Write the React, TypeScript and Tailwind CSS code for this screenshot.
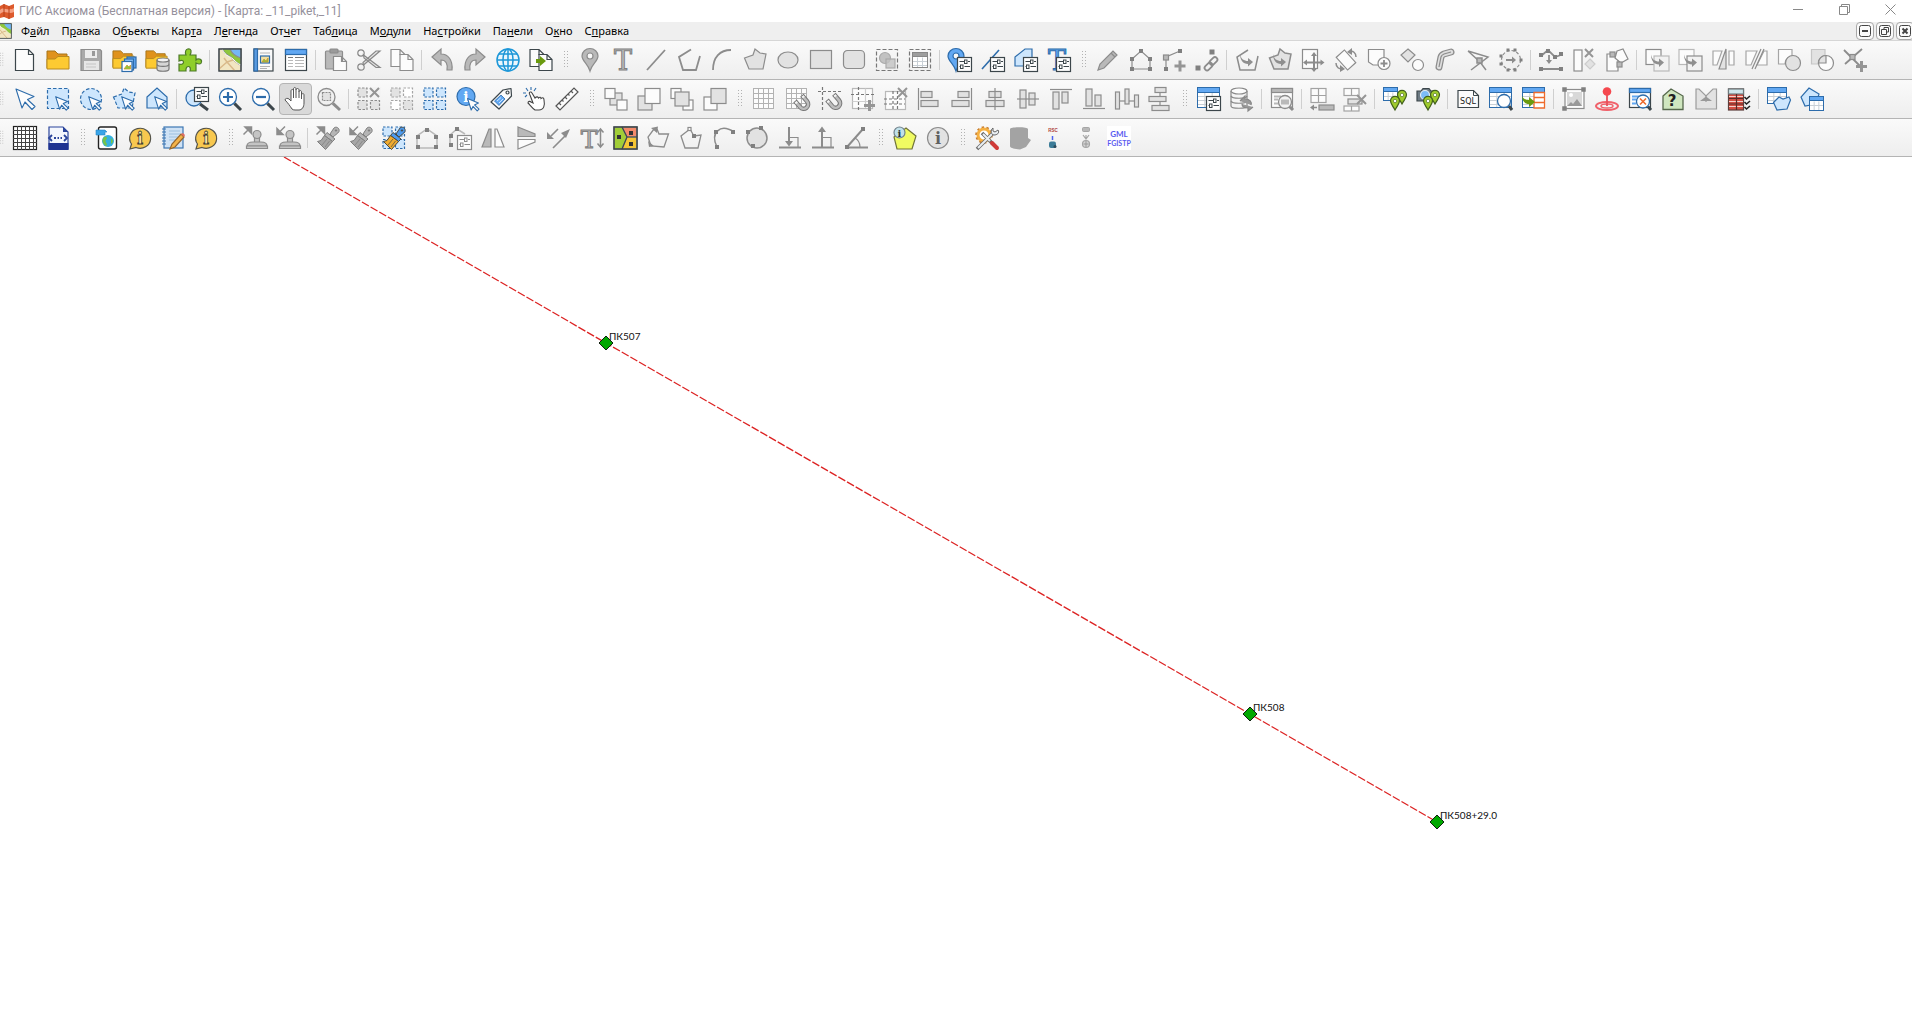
import React from "react";

const G = "#8c8c8c";
const M = "#b9b9b9";
const L = "#e2e2e2";
const D = "#3c464b";
const B = "#2d6cab";
const LB = "#cde6fd";
const AB = "#62a8f2";

type Item = [string, React.ReactNode] | "sep" | "grip";

/* ---------- shared icon parts ---------- */

const Sliders = ({ c = D }: { c?: string }) => (
  <g stroke={c} strokeWidth="1">
    <rect x="9.5" y="9.5" width="14" height="14" fill="#fdfdfd" strokeWidth="1.2" />
    <path d="M11.500 13.500H16M20 13.500H22M11.500 18.500H12.500M16.500 18.500H22" />
    <rect x="16.500" y="12" width="2.500" height="3.500" />
    <rect x="12.500" y="17" width="2.500" height="3.500" />
  </g>
);

const Cursor = ({ x = 9, y = 9, s = 0.66 }: { x?: number; y?: number; s?: number }) => (
  <path
    transform={`translate(${x} ${y}) scale(${s})`}
    d="M1 1L19 8.500L12.500 11.500L20 18.500L17 21.500L10 14L7 20Z"
    fill="#fdfdfd"
    stroke={B}
    strokeWidth={1.1 / s}
    strokeLinejoin="round"
  />
);

const Nodes = ({ p, s = 4, c = "#808080" }: { p: [number, number][]; s?: number; c?: string }) => (
  <g fill={c} stroke="none">
    {p.map(([x, y], i) => (
      <rect key={i} x={x - s / 2} y={y - s / 2} width={s} height={s} />
    ))}
  </g>
);

const Cross = ({ x, y, s = 8 }: { x: number; y: number; s?: number }) => (
  <path d={`M${x} ${y}l${s} ${s}M${x + s} ${y}l${-s} ${s}`} strokeWidth="2" stroke="#959595" />
);

const Plus = ({ x, y }: { x: number; y: number }) => (
  <path d={`M${x} ${y - 5.500}v11M${x - 5.500} ${y}h11`} stroke="#959595" strokeWidth="3" />
);

const Turn = ({ x = 0, y = 0 }: { x?: number; y?: number }) => (
  <path
    transform={`translate(${x} ${y})`}
    d="M6 7C7 12 10 14 14 14V11L19 15L14 19.500V17C9 17 6 13 6 7Z"
    fill="#8f8f8f"
    stroke="none"
  />
);

const GreenPin = ({ x, y }: { x: number; y: number }) => (
  <g transform={`translate(${x} ${y})`}>
    <path d="M5 14C3 10 0.500 8 0.500 4.800A4.500 4.500 0 0 1 9.500 4.800C9.500 8 7 10 5 14Z" fill="#9fcb2c" stroke="#42611b" strokeWidth="1.2" />
    <circle cx="5" cy="5" r="1.700" fill="#fff" stroke="#42611b" strokeWidth="0.600" />
  </g>
);

const Lens = ({ fill = "#fff", c = B, x = 14, y = 14, r = 6 }: { fill?: string; c?: string; x?: number; y?: number; r?: number }) => (
  <g>
    <path d={`M${x + r * 0.75} ${y + r * 0.75}L23 23`} stroke={c === G ? G : D} strokeWidth="3" />
    <circle cx={x} cy={y} r={r} fill={fill} stroke={c} strokeWidth="1.3" />
  </g>
);

const Table = ({ x = 0.5, y = 0.5, w = 22, h = 20, head = AB, c = B, line = "#c9d0d6" }) => (
  <g strokeWidth="1">
    <rect x={x} y={y} width={w} height={h} fill="#fff" stroke={c} />
    <path d={`M${x + w / 3} ${y + 5}v${h - 5}M${x + (2 * w) / 3} ${y + 5}v${h - 5}`} stroke={line} />
    {[9, 13, 17]
      .filter((r) => r < h - 1)
      .map((r) => (
        <path key={r} d={`M${x} ${y + r}h${w}`} stroke={line} />
      ))}
    <rect x={x} y={y} width={w} height={h} stroke={c} />
    <rect x={x} y={y} width={w} height={h > 15 ? 5 : 4} fill={head} stroke={c} />
  </g>
);

const Folder = ({ s = 1 }: { s?: number }) => (
  <g transform={`scale(${s})`} strokeWidth="1">
    <path d="M1 20V3H9L12 6H21V9" fill="#e0921c" stroke="#a6741a" />
    <path d="M1 21V11H9L12 8.500H23V21Z" fill="#fdca32" stroke="#b98a1e" />
  </g>
);

const Page = ({ x, y, w, h, c = G }: { x: number; y: number; w: number; h: number; c?: string }) => (
  <path d={`M${x} ${y}h${w - 5}l5 5v${h - 5}h${-w}zM${x + w - 5} ${y}v5h5`} fill="#fcfcfc" stroke={c} strokeWidth="1.2" />
);

const Four = ({ c, a, b, d, e }: { c: string; a: string; b: string; d: string; e: string }) => (
  <g stroke={c} strokeDasharray="2.500 1.500" strokeWidth="1.200">
    <rect x="1" y="1" width="9" height="9" fill={a} />
    <rect x="13.500" y="1" width="9" height="9" fill={b} />
    <rect x="1" y="13.500" width="9" height="9" fill={d} />
    <rect x="13.500" y="13.500" width="9" height="9" fill={e} />
  </g>
);

const Grid = () => (
  <g stroke="#b2b2b2" strokeWidth="1">
    <rect x="1.500" y="1.500" width="20" height="20" fill="#fcfcfc" />
    <path d="M6.500 1.500v20M11.500 1.500v20M16.500 1.500v20M1.500 6.500h20M1.500 11.500h20M1.500 16.500h20" />
  </g>
);

const Magnet = ({ x = 0, y = 0 }: { x?: number; y?: number }) => (
  <g transform={`translate(${x} ${y}) rotate(-40)`}>
    <path d="M0 0V8A4.500 4.500 0 0 0 9 8V0" stroke="#777" strokeWidth="4.600" />
    <path d="M0 1V8A4.500 4.500 0 0 0 9 8V1" stroke="#bdbdbd" strokeWidth="2.600" />
    <path d="M0 1V3M9 1V3" stroke="#f4f4f4" strokeWidth="2.600" />
  </g>
);

const TLetter = ({ c = "#7f7f7f", f = "#bcbcbc", x = 12, size = 27 }: { c?: string; f?: string; x?: number; size?: number }) => (
  <text x={x} y="21.500" textAnchor="middle" fontFamily="DejaVu Serif, serif" fontSize={size} fill={f} stroke={c} strokeWidth="1">
    T
  </text>
);

const InfoBubble = () => (
  <g>
    <path d="M2 23L3.500 18A10.500 10 0 1 1 8 21.500Z" fill="#f8c84f" stroke="#55544a" strokeWidth="1.200" />
    <text x="12" y="17.500" textAnchor="middle" fontFamily="DejaVu Serif, serif" fontWeight="700" fontSize="16" fill="#ffeeb0" stroke="#3d3d33" strokeWidth="0.800">
      i
    </text>
  </g>
);

const Brush = ({ c = "#7d7d7d", h = "#b5b5b5", b = "#a6a6a6" }: { c?: string; h?: string; b?: string }) => (
  <g stroke={c} strokeWidth="1">
    <path d="M14 8L18 2C20 0 24 2 23 5.500C21.500 8 19 9 17 11Z" fill={h} />
    <path d="M11 6.500L19 13L16.500 15.500L8.500 9.500Z" fill={h} />
    <path d="M8.500 9.500L16.500 15.500L9.500 23.500L1.500 15.500L5 14.500Z" fill={b} />
    <path d="M11 13L6 19M13.500 15L9 21" strokeWidth="0.700" />
    <circle cx="20" cy="4.500" r="0.700" fill={c} />
  </g>
);

const ArrowUR = ({ x = 0, y = 0 }: { x?: number; y?: number }) => (
  <path transform={`translate(${x} ${y})`} d="M0 8L5 3M1.500 0.500H8V7Z" fill="#8c8c8c" stroke="#8c8c8c" strokeWidth="1.500" />
);
const ArrowDL = ({ x = 0, y = 0 }: { x?: number; y?: number }) => (
  <path transform={`translate(${x} ${y})`} d="M9 0L4 5M1 2V8H7Z" fill="#8c8c8c" stroke="#8c8c8c" strokeWidth="1.500" />
);

const Stamp = () => (
  <g fill="#c4c4c4" stroke={G} strokeWidth="1.200">
    <path d="M11.500 17V11H16.500V17Z" />
    <circle cx="14" cy="8.500" r="4" />
    <path d="M4 20C4 17 7 16 10 16H18C21 16 24 17 24 20Z" />
    <path d="M3.500 20H24.500V22.500H3.500Z" />
  </g>
);

const MapPic = () => (
  <g>
    <rect x="1" y="1" width="22" height="22" fill="#f2e6c2" />
    <path d="M4 1H23V17C19 16 17 13 14 10S8 8 4 1Z" fill="#8fc63d" />
    <path d="M12 1H23V10C19 9 14 6 12 1Z" fill="#74b7f5" />
    <path d="M1 21L9 14M9 14L17 23M9 14L6 10M9 14L15 12" stroke="#d9b98a" strokeWidth="1.500" />
    <path d="M4 1C8 9 12 8 15 11S20 16 23 17" stroke="#fdfdfd" strokeWidth="1" />
    <rect x="1" y="1" width="22" height="22" stroke={D} strokeWidth="1.300" />
  </g>
);

const Pin = ({ c, f, x = 12 }: { c: string; f: string; x?: number }) => (
  <g stroke={c} strokeWidth="1.200">
    <path d={`M${x} 23C${x - 2} 16 ${x - 8} 13 ${x - 8} 8A8 7.500 0 0 1 ${x + 8} 8C${x + 8} 13 ${x + 2} 16 ${x} 23Z`} fill={f} />
    <circle cx={x} cy="8" r="3" fill="#f8f8f8" />
  </g>
);

const POLY = "M1.500 10L10 7L12 1L17 5L23 6L20 21H6Z";

/* ---------- toolbars ---------- */

const row1: Item[] = [
  ["Новый", <Page x={2.5} y={1.5} w={18} h={21} c={D} />],
  ["Открыть", <Folder />],
  ["Сохранить", <g><path d="M2 1.500H21L22.500 3V22.500H2Z" fill="#a9a9a9" stroke={G} /><rect x="6" y="2" width="12" height="8" fill="#ececec" stroke="none" /><rect x="13" y="3" width="3" height="5" fill="#999" stroke="none" /><rect x="5" y="13" width="15" height="9" fill="#e6e6e6" stroke="none" /><path d="M7 16H17M7 19H17" stroke="#c4c4c4" /></g>],
  ["Открыть рабочий набор", <g><Folder s={0.96} /><g stroke={B} fill="#fff"><rect x="15" y="9" width="9" height="11" fill="#62a8f2" /><rect x="12.500" y="11" width="9" height="11" fill="#8cc3fa" /><rect x="10" y="13.500" width="10" height="10" /></g><path d="M12 21L15 17L17 19L18.500 17V21Z" fill="#8fc63d" stroke="#d19c2b" strokeWidth="0.800" /></g>],
  ["Открыть базу данных", <g><Folder s={0.96} /><path d="M12 12V21C12 24 24 24 24 21V12" fill="#d6d6d6" stroke="#777" /><ellipse cx="18" cy="12" rx="6" ry="2" fill="#f4f4f4" stroke="#777" /><path d="M12 16.500C13 19 23 19 24 16.500" stroke="#777" /></g>],
  ["Модуль", <path d="M1 7H8C5 0 14 -1 13 4C13 6 12 6 12 7H18V12C20 10 24 11 23.500 14C23 17 20 16 18 15V23H12C14 17 7 17 8 23H1V16C7 18 7 10 1 13Z" fill="#8fce2b" stroke="#4d7a28" strokeWidth="1.200" />],
  "sep",
  ["Карта", <MapPic />],
  ["Отчет", <g><rect x="3" y="1" width="19" height="22" fill="#fafafa" stroke={D} /><rect x="3" y="1" width="3.500" height="22" fill="#5a9be0" stroke={B} /><path d="M9 5H19M9 18.500H19M9 20.500H16" stroke="#b4b4b4" /><rect x="9.500" y="8" width="9" height="7" fill="#f2dfa0" stroke={B} /><path d="M11 14L13 11L15 13L17 10V14Z" fill="#8fc63d" stroke="#c79b31" strokeWidth="0.800" /></g>],
  ["Таблица", <g><rect x="1.500" y="1.500" width="21" height="21" fill="#fff" stroke={D} /><rect x="1.500" y="1.500" width="21" height="5" fill={AB} stroke={B} /><path d="M4 9.500H9M11 9.500H20" stroke="#777" /><path d="M4 12.500H9M11 12.500H20M4 15.500H9M11 15.500H20M4 18.500H9M11 18.500H20" stroke="#b9b9b9" /></g>],
  "sep",
  ["Вставить", <g><rect x="1.500" y="3" width="17" height="18" rx="1" fill={M} stroke={G} /><rect x="6" y="1" width="8" height="4" rx="1" fill="#9b9b9b" /><Page x={9.5} y={8.5} w={13} h={14} /></g>],
  ["Вырезать", <g stroke="#888" strokeWidth="1.200"><circle cx="4" cy="5" r="3.200" /><circle cx="4" cy="19" r="3.200" /><path d="M6.500 7L23 19.500L19 19.500L7 10ZM6.500 17L23 3L19 3L6 14.500Z" fill="#e6e6e6" /></g>],
  ["Копировать", <g><Page x={1} y={1.5} w={14} h={17} /><Page x={10} y={6.5} w={13} h={16} /></g>],
  "sep",
  ["Отменить", <path d="M2 9L11 1V6C18 6 23 12 22 22H17C18 16 16 12 11 12V17Z" fill={M} stroke={G} />],
  ["Повторить", <path d="M22 9L13 1V6C6 6 1 12 2 22H7C6 16 8 12 13 12V17Z" fill={M} stroke={G} />],
  ["Веб-карта", <g stroke="#1d97d8" strokeWidth="1.500"><circle cx="12" cy="12" r="11" fill="#eaf6fd" /><ellipse cx="12" cy="12" rx="5" ry="11" /><path d="M12 1V23M1 12H23M3 6H21M3 18H21" /></g>],
  ["Экспорт", <g><Page x={1} y={1.5} w={14} h={17} c={D} /><Page x={10} y={6.5} w={13} h={16} c={D} /><path d="M7 11H11V8L17 13L11 18V15H7Z" fill="#6a9a0e" stroke="none" /></g>],
  "grip",
  ["Точка", <Pin c={G} f={M} />],
  ["Текст", <TLetter />],
  ["Линия", <path d="M3 22L21 2" stroke={G} strokeWidth="1.800" />],
  ["Полилиния", <path d="M14 1.500L2 9L6 22H19L23 8" stroke={G} strokeWidth="1.800" />],
  ["Дуга", <path d="M3 22C3 9 10 2 21 2" stroke={G} strokeWidth="1.800" />],
  ["Полигон", <path d={POLY} fill={L} stroke={G} />],
  ["Эллипс", <ellipse cx="12" cy="12" rx="10" ry="8" fill={L} stroke={G} />],
  ["Прямоугольник", <rect x="1.500" y="2.500" width="21" height="18" fill={L} stroke={G} />],
  ["Скругленный прямоугольник", <rect x="1.500" y="2.500" width="21" height="18" rx="4" fill={L} stroke={G} />],
  ["Группа объектов", <g><rect x="1.500" y="1.500" width="21" height="21" stroke="#777" strokeDasharray="4 2" /><circle cx="10" cy="10" r="5.500" fill="#c2c2c2" stroke="#aaa" /><rect x="11" y="11" width="9" height="9" fill="#c2c2c2" fillOpacity=".8" stroke="#aaa" /></g>],
  ["Таблица на карте", <g><rect x="1.500" y="1.500" width="21" height="21" stroke="#777" strokeDasharray="4 2" /><Table x={4.5} y={4.5} w={15} h={15} head="#9e9e9e" c="#888" /></g>],
  "sep",
  ["Стиль точки", <g><Pin c={B} f={AB} x={8} /><Sliders /></g>],
  ["Стиль линии", <g><path d="M1 21L18 2" stroke={B} strokeWidth="1.600" /><Sliders /></g>],
  ["Стиль полигона", <g><path d="M1 18V9L11 1H18V18Z" fill={LB} stroke={B} /><Sliders /></g>],
  ["Стиль текста", <g><TLetter c={B} f={AB} x={10} size={27} /><Sliders /></g>],
  "grip",
  ["Правка объекта", <path d="M2 22L4 16L17 3L21 7L8 20ZM15 5L19 9" fill={M} stroke={G} />],
  ["Правка узлов", <g><path d="M3 11V21H21V11L12 3Z" stroke={G} /><Nodes p={[[12, 3], [3, 11], [21, 11], [3, 21], [21, 21]]} /></g>],
  ["Добавить узел", <g><path d="M4 20V9L18 3" stroke={G} /><Nodes p={[[4, 21], [18, 3]]} /><rect x="1.500" y="7" width="5" height="5" fill={M} stroke={G} /><Plus x={18} y={18} /></g>],
  ["Связать узлы", <g><Nodes p={[[17, 4], [3, 20]]} s={5} /><g strokeWidth="1.800" stroke={G}><rect x="14" y="10.500" width="9" height="5" rx="2.500" transform="rotate(-45 18.500 13)" /><rect x="9" y="16" width="9" height="5" rx="2.500" transform="rotate(-45 13.500 18.500)" /></g></g>],
  "sep",
  ["Замкнуть", <g><path d="M13 2L2 9L5 22H20L23 8" stroke={G} strokeWidth="1.500" /><Turn x={-1} y={-1} /></g>],
  ["Преобразовать", <g><path d={POLY} fill={L} stroke={G} strokeWidth="1.500" /><Turn x={-1} y={-1} /></g>],
  ["Переместить", <g><rect x="1.500" y="1.500" width="15" height="19" fill="#fcfcfc" stroke={G} /><path d="M13 8V21M6 14.500H20" stroke={G} strokeWidth="2" /><path d="M13 4L16 8H10ZM13 24L16 20.500H10ZM2 14.500L6 11.500V17.500ZM23.500 14.500L19.500 11.500V17.500Z" fill={G} stroke="none" /></g>],
  ["Повернуть", <g><rect x="3.500" y="6.500" width="17" height="11" transform="rotate(48 12 12)" fill="#fcfcfc" stroke={G} /><path d="M15 4C19 2 22 5 22 9M9 20C5 22 2 19 2 15" stroke={G} strokeWidth="1.500" /><path d="M13 4L18 0V7ZM11 21L6 17V24Z" fill={G} stroke="none" /></g>],
  ["Добавить контур", <g><path d="M1.500 1.500H17V17H6L1.500 14Z" fill="#fcfcfc" stroke={G} /><circle cx="17" cy="15.500" r="6" fill="#fcfcfc" stroke={G} /><path d="M17 12V19M13.500 15.500H20.500" stroke={G} strokeWidth="1.800" /></g>],
  ["Соединить", <g stroke={G}><path d="M8 1L15 7L8 14L1 7Z" fill={L} /><circle cx="18" cy="17" r="5.500" fill="#fcfcfc" /></g>],
  ["Буфер", <g><path d="M6 19L8 9Q8.500 7 11 6L18 4" stroke={G} strokeWidth="7" strokeLinecap="round" /><path d="M6 19L8 9Q8.500 7 11 6L18 4" stroke="#dedede" strokeWidth="4.500" strokeLinecap="round" /><path d="M6 19L8 9Q8.500 7 11 6L18 4" stroke={G} /></g>],
  ["Пересечение", <g stroke={G} strokeWidth="1.500"><path d="M2 3L22 9L5 22M2 3L14 14L20 22" /><rect x="11" y="10" width="5" height="5" fill={M} /></g>],
  ["Разрядить узлы", <g><circle cx="12" cy="12" r="9.500" fill="#f0f0f0" stroke={G} strokeDasharray="3 2" /><Nodes s={3} p={[[9, 2], [16, 2], [2, 8], [22, 12], [2, 16], [9, 22], [16, 22]]} /><path d="M7 12H14" stroke={G} strokeWidth="2" /><path d="M13 8.500L17 12L13 15.500Z" fill={G} stroke="none" /></g>],
  "sep",
  ["Выровнять", <g stroke={G}><path d="M2 8L9 2L16 9L22 7M2 21H22M10 7V13" strokeWidth="1.800" /><path d="M7 12H13L10 16Z" fill={G} stroke="none" /><Nodes s={4} p={[[2, 7], [9, 3], [16, 9], [22, 6], [2, 21], [22, 21]]} /></g>],
  ["Удалить часть", <g><rect x="2" y="2" width="8" height="21" fill="#fcfcfc" stroke={G} /><Cross x={13} y={1} /><path d="M18 11L23 16L18 21L13 16Z" fill={L} stroke="#ccc" /></g>],
  ["Перенести стиль", <g stroke={G}><path d="M2 6H13V23H2Z" fill="#fcfcfc" /><path d="M12 3L18 1L23 11L16 15L10 10Z" fill="#fcfcfc" /><rect x="5" y="4" width="5" height="5" fill={M} /><rect x="12" y="14" width="5" height="5" fill={M} /></g>],
  "sep",
  ["Копировать в слой", <g stroke={G}><rect x="1" y="1.500" width="15" height="15" fill="#fcfcfc" /><rect x="9" y="8" width="15" height="15" fill="#f2f2f2" stroke={M} /><Turn y={-0.5} /></g>],
  ["Переместить в слой", <g stroke={M}><rect x="1" y="1.500" width="15" height="15" fill="#fcfcfc" /><rect x="9" y="8" width="15" height="15" fill="#f2f2f2" stroke={G} /><Turn y={-0.5} /></g>],
  ["Разрезать", <g stroke="#a5a5a5"><path d="M2 3H11L6 17H2ZM18 3H23V17H18Z" fill="#fcfcfc" /><path d="M15 1V21H8Z" fill={L} stroke={G} /></g>],
  ["Разрезать линией", <g stroke="#a5a5a5"><path d="M2 3H13L7 17H2ZM20 3H23V17H13Z" fill="#fcfcfc" /><path d="M8 21L17 1M11 21L20 1" stroke={G} /></g>],
  ["Стереть", <g stroke="#a5a5a5"><path d="M1.500 1.500H15V8Q8 10 8 16H1.500Z" fill="#fcfcfc" /><circle cx="16" cy="15" r="7.500" fill={L} stroke={G} /></g>],
  ["Стереть снаружи", <g stroke="#c5c5c5"><path d="M1.500 1.500H15V8Q8 10 8 16H1.500Z" fill={L} /><circle cx="16" cy="15" r="7.500" fill="#fcfcfc" stroke={G} /><path d="M16 7.500V15H8.500A7.500 7.500 0 0 1 16 7.500Z" fill={L} stroke={G} /></g>],
  ["Добавить узлы пересечения", <g stroke={G}><path d="M1 2L19 20M19 1L2 16" strokeWidth="1.800" /><rect x="7" y="6.500" width="5" height="5" fill={M} /><Plus x={18.500} y={18.500} /></g>],
];

const row2: Item[] = [
  ["Выбор", <Cursor x={2} y={1} s={1} />],
  ["Выбор в рамке", <g><rect x="1.500" y="1.500" width="21" height="20" fill={LB} stroke={B} strokeDasharray="3.500 2" /><Cursor /></g>],
  ["Выбор в круге", <g><circle cx="12" cy="12" r="10.500" fill={LB} stroke={B} strokeDasharray="3.500 2" /><Cursor /></g>],
  ["Выбор в полигоне", <g><path d={POLY} fill={LB} stroke={B} strokeDasharray="3.500 2" /><Cursor /></g>],
  ["Выбор в области", <g><path d="M2 10L12 1L22 10V21H2Z" fill={LB} stroke={B} /><Cursor /></g>],
  "sep",
  ["Масштаб", <g><Lens fill={LB} x={9} y={11} r={8} /><g transform="translate(0 -9)"><Sliders /></g></g>],
  ["Увеличить", <g><Lens x={10} y={10} r={8.5} /><path d="M10 5V15M5 10H15" stroke={B} strokeWidth="2.200" /></g>],
  ["Уменьшить", <g><Lens x={10} y={10} r={8.5} /><path d="M5 10H15" stroke={B} strokeWidth="2.200" /></g>],
  ["Сдвиг", <path d="M8 22C6 19 4 16 1 13C1 11 4 11 5 12L7 14V4C7 2 9.500 2 9.500 4V2C9.500 0 12 0 12 2V3C12 1 15 1 15 3V5C15 3 17.500 3 17.500 5V8C18 6 20 6 20 8V16C20 20 18 23 15 23H11Q9 23 8 22ZM9.500 4V11M12 3V11M15 5V11M17.500 8V12" fill="#fff" stroke="#555" strokeWidth="1" />],
  ["Масштаб по выборке", <g><Lens c={G} fill="#f0f0f0" x={9.5} y={10} r={8.5} /><rect x="5.500" y="5.500" width="8" height="8" fill={L} stroke={G} strokeDasharray="2 1" /></g>],
  "sep",
  ["Отменить выбор", <g><Four c={G} a={L} b="none" d={L} e={L} /><rect x="12" y="0" width="12" height="11.500" fill="#f4f4f4" stroke="none" /><Cross x={13} y={1} s={9} /></g>],
  ["Инвертировать выбор", <Four c="#a5a5a5" a={L} b="#fff" d="#fff" e={L} />],
  ["Выбрать все", <Four c={B} a={LB} b={LB} d={LB} e={LB} />],
  ["Информация", <g><circle cx="10" cy="9.500" r="9" fill={AB} stroke={B} /><text x="10" y="15" textAnchor="middle" fontFamily="DejaVu Serif, serif" fontWeight="700" fontSize="14" fill="#fff" stroke="none">i</text><Cursor x={11} y={11} s={0.6} /></g>],
  ["Подпись", <g stroke={D}><path d="M2 15L14 3L22 1.500L22.500 9L10 22Z" fill="#fcfcfc" strokeLinejoin="round" /><circle cx="18.500" cy="5.500" r="1.500" /><path d="M5.500 14L12 8L16 12L10 18.500Z" fill={AB} stroke={B} strokeWidth="0.800" /><path d="M8 14L12 10.500M10 16L14 12" stroke="#e6f2fe" strokeWidth="0.800" /></g>],
  ["Горячая ссылка", <g stroke="#444" strokeWidth="1.100"><path d="M8 8C6 5 9 4 10 6L13 11C15 9 16 10 16.500 11C18 9.500 19 10.500 19 11.500C21 10 22 11 22 13C23 18 22 23 17 23H13C10 21 8 18 6 16C6 14 8 14 9 15L11 16Z" fill="#fff" /><path d="M4 1L6 4M9 0V3M14 1L12 4M1 6H4M3 10L5 8" stroke={B} /></g>],
  ["Линейка", <path d="M1 19L19 1L23 5L5 23ZM4 16L6 18M7 13L8.500 14.500M10 10L12 12M13 7L14.500 8.500M16 4L18 6" fill="#fcfcfc" stroke="#555" />],
  "grip",
  ["На передний план", <g stroke={G}><rect x="6" y="6" width="12" height="12" fill={L} /><rect x="1" y="1.500" width="10" height="10" fill="#fcfcfc" /><rect x="13" y="13" width="10" height="10" fill="#fcfcfc" /></g>],
  ["Вперед", <g stroke={G}><rect x="1" y="9" width="14" height="14" fill={L} /><rect x="8" y="1.500" width="15" height="15" fill="#fcfcfc" /></g>],
  ["Назад", <g stroke={G}><rect x="1" y="1.500" width="10" height="10" fill="#fcfcfc" /><rect x="13" y="13" width="10" height="10" fill="#fcfcfc" /><rect x="5" y="5" width="14" height="14" fill={L} /></g>],
  ["На задний план", <g stroke={G}><rect x="1" y="10" width="13" height="13" fill="#fcfcfc" /><rect x="8" y="1.500" width="15" height="15" fill={L} /></g>],
  "grip",
  ["Сетка", <Grid />],
  ["Привязка к сетке", <g><Grid /><Magnet x={10} y={14} /></g>],
  ["Привязка к направляющим", <g><path d="M0 4.500H23M4.500 0V23" stroke="#777" strokeDasharray="3 2" /><Magnet x={9} y={13} /></g>],
  ["Добавить направляющие", <g><rect x="1.500" y="1.500" width="20" height="20" fill="#fcfcfc" stroke={M} /><path d="M14.500 1.500V21M1.500 14.500H21" stroke="#d0d0d0" /><path d="M0 7.500H23M7.500 0V23" stroke="#777" strokeDasharray="3 2" /><Plus x={18.500} y={18.500} /></g>],
  ["Удалить направляющие", <g><rect x="1.500" y="4.500" width="20" height="18" fill="#fcfcfc" stroke={M} /><path d="M0 12H21M0 17H21M9 4V23M13.500 4V23" stroke="#777" strokeDasharray="3 2" /><Cross x={14} y={1} s={9} /></g>],
  ["По левому краю", <g stroke={G}><path d="M1.500 1V23" /><rect x="4" y="4.500" width="11" height="6" fill={L} /><rect x="4" y="13.500" width="17" height="6" fill={L} /></g>],
  ["По правому краю", <g stroke={G}><path d="M21.500 1V23" /><rect x="8" y="4.500" width="11" height="6" fill={L} /><rect x="2" y="13.500" width="17" height="6" fill={L} /></g>],
  ["По центру", <g stroke={G}><rect x="6" y="4.500" width="12" height="6" fill={L} /><rect x="3" y="13.500" width="18" height="6" fill={L} /><path d="M12 1V23" /></g>],
  ["По середине", <g stroke={G}><rect x="4" y="3" width="6" height="18" fill={L} /><rect x="13" y="6" width="6" height="12" fill={L} /><path d="M1 12H23" /></g>],
  ["По верхнему краю", <g stroke={G}><path d="M1 2.500H23" /><rect x="4" y="5" width="6" height="17" fill={L} /><rect x="13" y="5" width="6" height="11" fill={L} /></g>],
  ["По нижнему краю", <g stroke={G}><path d="M1 21.500H23" /><rect x="4" y="2" width="6" height="17" fill={L} /><rect x="13" y="8" width="6" height="11" fill={L} /></g>],
  ["Распределить по горизонтали", <g stroke={G}><path d="M5 14H20" /><rect x="0.500" y="5" width="4" height="17" fill={L} /><rect x="10" y="2" width="4" height="15" fill={L} /><rect x="19.500" y="8" width="4" height="12" fill={L} /></g>],
  ["Распределить по вертикали", <g stroke={G}><path d="M12 4V20" /><rect x="7" y="0.500" width="11" height="5" fill={L} /><rect x="1" y="9.500" width="17" height="5" fill={L} /><rect x="4" y="18.500" width="17" height="5" fill={L} /></g>],
  "grip",
  ["Структура таблицы", <g><Table /><Sliders /></g>],
  ["Обновить базу", <g stroke="#888"><path d="M1 4V19C1 22 17 22 17 19V4" fill="#f4f4f4" /><ellipse cx="9" cy="4" rx="8" ry="3" fill="#fcfcfc" /><path d="M1 9C2 12 16 12 17 9M1 14C2 17 16 17 17 14" /><path d="M10 14L15 9V12C20 12 22 15 21 18M23 20L18 24V21C14 21 12 19 12 17" fill="#999" stroke="#888" /></g>],
  "sep",
  ["Просмотр записи", <g><rect x="1.500" y="1.500" width="21" height="19" fill="#fcfcfc" stroke={G} /><rect x="1.500" y="1.500" width="21" height="4" fill={M} stroke={G} /><path d="M4 9.500H11M4 12.500H8M4 16.500H8" stroke={M} strokeWidth="2" /><Lens c={G} x={15} y={15} r={6.5} fill="#f2f2f2" /><rect x="11" y="12.500" width="8" height="5" fill={M} stroke="none" /></g>],
  "sep",
  ["Добавить строку", <g stroke="#a2a2a2"><rect x="1" y="1.500" width="15" height="14" fill="#fcfcfc" /><path d="M8.500 1.500V15.500M1 8.500H16" /><rect x="9" y="18" width="15" height="5" fill={M} stroke={G} /><path d="M2 20.500H7" stroke={G} strokeWidth="1.500" /><path d="M0 20.500L4 17.500V23.500Z" fill={G} stroke="none" /></g>],
  ["Удалить строку", <g stroke="#a2a2a2"><rect x="1" y="1.500" width="15" height="7" fill="#fcfcfc" /><path d="M8.500 1.500V8" /><rect x="5" y="12" width="14" height="5" fill={L} stroke={G} /><rect x="1" y="19" width="15" height="5" fill="#fcfcfc" /><path d="M8.500 19V24" /><Cross x={14} y={8} s={9} /></g>],
  "sep",
  ["Создать точки", <g><Table w={14} h={13} /><GreenPin x={14} y={3} /><GreenPin x={7} y={9} /></g>],
  ["Точки по фото", <g><path d="M1 4H5L7 1.500H13L15 4H19V14H1Z" fill="#6d7a83" stroke={D} /><circle cx="9" cy="8" r="4.500" fill="#7dbcf7" stroke="#e6eef4" /><GreenPin x={14} y={3} /><GreenPin x={7} y={9} /></g>],
  "sep",
  ["SQL-запрос", <g><path d="M2 3.500H17.500L22.500 8.500V20.500H2Z" fill="#fcfcfc" stroke={D} /><path d="M17.500 3.500V8.500H22.500" stroke={D} strokeWidth="1" /><text x="12" y="17" textAnchor="middle" fontFamily="DejaVu Sans, sans-serif" fontSize="8" fill="#222" stroke="none">SQL</text></g>],
  ["Найти", <g><Table /><Lens x={15} y={14} r={6.5} /></g>],
  ["Обновить колонку", <g><Table /><path d="M12 5.500H22.500V21H12ZM12 10.500H22M12 15.500H22" fill="#fff" stroke="#ee6b2d" strokeWidth="1.300" /><path d="M0 9C2 13 5 13 7 13V10L13 15L7 20V17C3 17 0 14 0 9Z" fill="#6a9a0e" stroke="none" /></g>],
  "sep",
  ["Привязка изображения", <g><rect x="3" y="2.500" width="19" height="19" fill="#fcfcfc" stroke={G} /><rect x="5" y="5" width="15" height="14" fill="#d8d8d8" stroke="none" /><circle cx="9" cy="8" r="2" fill="#fff" stroke="none" /><path d="M5 19L9 15L11 17L15 12L20 19Z" fill="#999" stroke="none" /><Nodes s={4.5} p={[[2.500, 2.500], [21.500, 2.500], [2.500, 21.500]]} /></g>],
  ["Местоположение", <g><ellipse cx="12" cy="19" rx="11" ry="4" stroke="#f0616a" strokeWidth="2" /><ellipse cx="12" cy="19" rx="6" ry="2" stroke="#f0616a" strokeWidth="1.500" /><path d="M12 7V19" stroke="#e8505a" strokeWidth="1.800" /><circle cx="12" cy="4.500" r="4.300" fill="#f5484e" stroke="none" /></g>],
  ["Проверка таблицы", <g><rect x="1.500" y="1.500" width="21" height="19" fill="#fcfcfc" stroke={D} /><rect x="1.500" y="1.500" width="21" height="4" fill={AB} stroke={B} /><path d="M4 9.500H11M4 12.500H8M4 16.500H8" stroke={AB} strokeWidth="2" /><Lens x={15} y={14.500} r={6.5} /><path d="M12 11.500L18 17.500M18 11.500L12 17.500" stroke="#ee6b2d" strokeWidth="1.600" /></g>],
  ["Поиск адреса", <g><path d="M2 9L10 2L22 9V22.500H2Z" fill="#cfe6bf" stroke="#56684c" strokeWidth="1.300" /><text x="11" y="19" textAnchor="middle" fontFamily="DejaVu Sans, sans-serif" fontWeight="700" fontSize="15" fill="#222" stroke="none">?</text></g>],
  ["Разделить объект", <g stroke="#9c9c9c"><path d="M2 2H5L12 9L19 2H22.500V22H2Z" fill={L} /><path d="M12 8V15" /><path d="M6 14L12 9.500L18 14Z" fill="#999" stroke="none" /></g>],
  ["Список проверок", <g><rect x="1.500" y="2" width="15" height="21" fill="#d34f43" stroke="#5d3f3c" /><rect x="1.500" y="2" width="15" height="5" fill="#cfe6ec" stroke="#6d7a7d" /><path d="M2 9.500H16M2 14.500H16M2 19.500H16" stroke="#f4d2cc" /><path d="M2 11.500H16M2 17H16M9.500 7V23" stroke="#572c28" /><path d="M17.500 10L19.500 12L23 9M17.500 15L19.500 17L23 14M17.500 20L19.500 22L23 19" stroke="#222" strokeWidth="1.600" /></g>],
  "sep",
  ["Таблица в карту", <g><Table w={19} h={16} /><path d="M12 10L16 12L22 10L23.500 13L20 22L10 23L6.500 15.500Z" fill={LB} stroke={B} /></g>],
  ["Карта в таблицу", <g><path d="M9 1L19 7L16 17L5 19L1 10Z" fill={LB} stroke={B} /><Table x={9.5} y={9.5} w={14} h={14} /></g>],
];

const row3: Item[] = [
  ["Координатная сетка", <g><rect x="0.500" y="0.500" width="23" height="23" fill="#fff" stroke="#222" /><path d="M4.500 0V24M8.500 0V24M12.500 0V24M16.500 0V24M20.500 0V24M0 4.500H24M0 8.500H24M0 12.500H24M0 16.500H24M0 20.500H24" stroke="#444" strokeWidth="1" /></g>],
  ["Экспорт XML", <g><path d="M3 1H17L22 6V23H3Z" fill="#f4f7fd" stroke="#2b459b" /><path d="M17 1V6H22Z" fill="#2b459b" stroke="none" /><rect x="2.500" y="17" width="20" height="7" fill="#1f3391" stroke="none" /><path d="M6 9L3 12L6 15M18 9L21 12L18 15M8 12H10M11.500 12H13M14.500 12H16" stroke="#2b459b" strokeWidth="1.800" /></g>],
  "grip",
  ["Слой WMS", <g><rect x="3.500" y="1" width="18" height="22" rx="2" fill="#fff" stroke="#222" strokeWidth="1.400" /><path d="M1 4H10L12 6H10V9H1Z" fill="#3aa5e8" stroke="#2584c4" strokeWidth="0.600" /><circle cx="13" cy="15" r="6" fill="#35b0df" stroke="none" /><path d="M9 11C12 10 13 12 11 14S14 18 11 20C8 18 6 14 9 11ZM16 12C18 14 19 16 16 18Z" fill="#74c34a" stroke="none" /></g>],
  ["Справка по слою", <InfoBubble />],
  ["Блокнот", <g><rect x="3" y="1" width="19" height="21" fill="#cfe2f5" stroke="#3d77b3" /><path d="M1 3H5M1 6H5M1 9H5M1 12H5M1 15H5M1 18H5" stroke="#3d77b3" /><path d="M8 5H19M8 8H19M8 11H19M8 14H15" stroke="#9dbfdf" /><path d="M9 23L11 18L20 8L23 11L14 21Z" fill="#f3b34a" stroke="#94652b" /><path d="M20 8L22 7L24 9L23 11Z" fill="#e26e62" stroke="none" /></g>],
  ["Справка", <InfoBubble />],
  "grip",
  ["Взять образец", <g><Stamp /><ArrowUR x={0.500} y={0.500} /></g>],
  ["Поставить образец", <g><Stamp /><ArrowDL x={0} y={0.500} /></g>],
  "sep",
  ["Взять стиль", <g><Brush /><ArrowUR x={0.500} y={0.500} /></g>],
  ["Применить стиль", <g><Brush /><ArrowDL x={0} y={0.500} /></g>],
  ["Стиль выборки", <g><Four c={B} a={LB} b={LB} d={LB} e={LB} /><Brush c="#4a4a40" h="#4c9bf0" b="#f0ab2f" /></g>],
  ["Узлы", <g><path d="M2 22V10L12 3L22 10V22Z" stroke={M} strokeWidth="1.500" /><Nodes p={[[12, 4], [3, 11], [21, 11], [3, 21], [21, 21]]} /></g>],
  ["Настройка узлов", <g><path d="M2 20V9L9 3L17 8" stroke={M} strokeWidth="1.500" /><Nodes p={[[9, 3], [3, 10], [3, 19]]} /><Sliders c="#8c8c8c" /></g>],
  ["Отразить по горизонтали", <g stroke={G}><path d="M10 3V21H1L8 3Z" fill={M} /><path d="M14 3V21H23L16 3Z" fill="#fcfcfc" /></g>],
  ["Отразить по вертикали", <g stroke={G}><path d="M4 1L21 8V10.500H4Z" fill={M} /><path d="M4 23L21 16V13.500H4Z" fill="#fcfcfc" /></g>],
  ["Продлить линию", <g stroke={G}><path d="M6 22L19 9M4 10L11 3" strokeWidth="1.600" /><path d="M14 7L23 3L19 12Z" fill={G} stroke="none" /><path d="M0 6V13H7Z" fill={G} stroke="none" /></g>],
  ["Размер текста", <g><TLetter x={9} size={25} /><path d="M20.500 4V20M17.500 6.500L20.500 3L23.500 6.500M17.500 17.500L20.500 21L23.500 17.500" stroke={G} strokeWidth="1.500" /></g>],
  ["Диаграмма Вороного", <g><rect x="1" y="1" width="23" height="22" fill="#a1ce38" /><path d="M9 1H24V11H14Z" fill="#f38a6b" /><path d="M14 11H24V23H9Z" fill="#f6c634" /><path d="M9 1L14 11L9 23M14 11H24" stroke={D} /><rect x="1" y="1" width="23" height="22" stroke={D} strokeWidth="1.500" /><Nodes c="#333" s={4} p={[[6, 11], [18, 7], [18, 18]]} /></g>],
  ["Направление обхода", <g><path d="M11 3L13 8L22.500 8L18 21L5 20L2 11L8 3" stroke={G} strokeWidth="1.300" /><path d="M5 2L12 0.500L11 7ZM2 15L8 20L3 21Z" fill={G} stroke="none" /></g>],
  ["Начальный узел", <g><path d="M11 3L2 10L6 22H19L22 9L15 10L11 3" stroke={G} strokeWidth="1.300" /><rect x="9" y="1.500" width="3" height="3" fill="#fff" stroke={G} /><Nodes p={[[15, 10]]} /></g>],
  ["Дуга по точкам", <g><path d="M5 21C-2 7 8 -3 22 6" stroke={G} strokeWidth="1.500" /><Nodes p={[[5, 21], [4, 6], [21, 6]]} /></g>],
  ["Окружность по точкам", <g><circle cx="12" cy="12" r="10" fill={L} stroke={G} strokeWidth="1.500" /><Nodes p={[[16, 2], [3, 6], [8, 20]]} /></g>],
  ["Перпендикуляр вниз", <g stroke={G}><path d="M1 21.500H23M11 1V16" strokeWidth="2" /><path d="M11 11.500H20V21" /><path d="M7 15H15L11 20.500Z" fill={G} stroke="none" /></g>],
  ["Перпендикуляр вверх", <g stroke={G}><path d="M1 21.500H23M11 4V21" strokeWidth="2" /><path d="M11 11.500H20V21" /><path d="M7 6H15L11 0.500Z" fill={G} stroke="none" /></g>],
  ["Угол", <g stroke={G}><path d="M3 21.500H24M3 21L19 3" strokeWidth="2" /><path d="M11 12Q16 15 16 21" /><Nodes p={[[3, 21], [19, 3]]} /></g>],
  "grip",
  ["Сведения о полигоне", <g><path d="M13 2L23 10L19 23H4L1 11Z" fill="#f0fb62" stroke="#70733a" /><circle cx="6.500" cy="6.500" r="5.500" fill="#bfe0ea" stroke="#70818a" /><text x="6.500" y="10.500" textAnchor="middle" fontFamily="DejaVu Serif, serif" fontWeight="700" fontSize="10" fill="#223333" stroke="none">i</text></g>],
  ["О программе", <g><circle cx="12" cy="12" r="10.500" fill={L} stroke={G} /><text x="12" y="18" textAnchor="middle" fontFamily="DejaVu Serif, serif" fontWeight="700" fontSize="16" fill="#606060" stroke="none">i</text></g>],
  "grip",
  ["Инструменты", <g><circle cx="9" cy="9" r="6" fill="#fff" stroke="#f5b041" strokeWidth="3" /><circle cx="9" cy="9" r="8" stroke="#c97b25" strokeWidth="1.500" strokeDasharray="2.500 2.500" /><path d="M2 23L18 7M7 7L18 18" stroke="#6b6b6b" strokeWidth="3.600" /><path d="M3 22L18 7M8 8L15 15" stroke="#e9eef2" strokeWidth="2" /><path d="M17 17L22 22" stroke="#cf3a38" strokeWidth="4" strokeLinecap="round" /><path d="M18 2C15 4 16 9 19 9C22 9 25 7 23 4L20 6L18 5Z" fill="#e9eef2" stroke="#666" strokeWidth="1" /></g>],
  ["База", <path d="M2 3C2 0.500 20 0.500 20 3V12L23 14L18 21L12 23.500C6 23 2 22 2 20Z" fill="#a3a3a3" stroke="none" />],
  ["RSC", <g><text x="12" y="6" textAnchor="middle" fontFamily="Liberation Sans, sans-serif" fontWeight="700" fontSize="4.500" fill="#b0413c" stroke="none">RSC</text><path d="M11.500 10V14" stroke="#4a62f0" strokeWidth="1.500" /><rect x="8" y="15.500" width="7" height="6.500" rx="2" fill="#3c7c98" stroke="none" /><circle cx="14" cy="20.500" r="1.500" fill="#2c4a5c" stroke="none" /></g>],
  ["SIT", <g><rect x="8.500" y="1.500" width="7" height="4" rx="1" fill="#b8b8b8" stroke="#999" strokeWidth="0.800" /><path d="M9 9L12 13L15 9M12 9V14" stroke="#a5a5a5" /><circle cx="12" cy="18" r="3.500" fill="#d4d4d4" stroke="#a5a5a5" /><path d="M12 15V21M9.500 18H14.500" stroke="#999" strokeWidth="1" /></g>],
  ["GML ФГИС ТП", <g><rect width="24" height="24" fill="#fff" stroke="none" /><g fontFamily="Lato, sans-serif" fontWeight="700" fill="#5a5af0" stroke="none" textAnchor="middle"><text x="12" y="11" fontSize="8">GML</text><text x="12" y="20" fontSize="7">FGISTP</text></g></g>],
];

const Grip = ({ first }: { first?: boolean }) => (
  <span className={`flex shrink-0 justify-end pr-1 ${first ? "w-2" : "w-4"}`}>
    <svg width="5" height="18" viewBox="0 0 5 18" fill="#b2b2b2">
      {[0, 3, 6, 9, 12, 15].map((y) => (
        <g key={y}>
          <rect x="0" y={y} width="1" height="1" />
          <rect x="3" y={y} width="1" height="1" />
        </g>
      ))}
    </svg>
  </span>
);

const Toolbar = ({ items, label, active, className }: { items: Item[]; label: string; active?: string; className: string }) => (
  <div role="toolbar" aria-label={label} className={`flex items-center border-b border-[#b4b4b4] bg-linear-to-b from-[#fafafa] to-[#eeeeee] ${className}`}>
    <Grip first />
    {items.map((it, i) =>
      it === "sep" ? (
        <span key={i} className="flex w-[7px] shrink-0 justify-center">
          <span className="h-5 w-px bg-[#cfcfcf]" />
        </span>
      ) : it === "grip" ? (
        <Grip key={i} />
      ) : (
        <button
          key={i}
          type="button"
          aria-label={it[0]}
          title={it[0]}
          className={`flex h-8 w-[33px] shrink-0 items-center justify-center rounded-sm border ${it[0] === active ? "border-[#b5b5b5] bg-[#d9d9d9]" : "border-transparent hover:bg-gray-200"}`}
        >
          <svg width="24" height="24" viewBox="0 0 24 24" fill="none" stroke={G} strokeWidth="1.200" className="overflow-visible">
            {it[1]}
          </svg>
        </button>
      ),
    )}
  </div>
);

const menu: [string, string, string][] = [
  ["Ф", "а", "йл"],
  ["П", "р", "авка"],
  ["О", "б", "ъекты"],
  ["Кар", "т", "а"],
  ["Л", "е", "генда"],
  ["От", "ч", "ет"],
  ["Таб", "л", "ица"],
  ["М", "о", "дули"],
  ["На", "с", "тройки"],
  ["Па", "н", "ели"],
  ["О", "к", "но"],
  ["С", "п", "равка"],
];

const points = [
  { x: 606, y: 186, name: "ПК507" },
  { x: 1250, y: 557, name: "ПК508" },
  { x: 1437, y: 665, name: "ПК508+29.0" },
];

const mdi: [string, React.ReactNode][] = [
  ["Свернуть карту", <path d="M3 6H9" strokeWidth="2" />],
  ["Восстановить карту", <path d="M5 4V2.500H9.500V7H8M2.500 4.500H7.500V9.500H2.500Z" strokeWidth="1" />],
  ["Закрыть карту", <path d="M3.500 3.500L8.500 8.500M8.500 3.500L3.500 8.500" strokeWidth="2" />],
];

export default function App() {
  return (
    <div className="flex min-h-screen flex-col overflow-hidden bg-white">
      <header className="flex h-[22px] items-center font-['Roboto',sans-serif] text-xs text-[#96919c]">
        <svg width="14" height="16" viewBox="0 0 14 16" className="mr-[5px] shrink-0">
          <path d="M0 3L4 1L9 3L14 1V14L9 16L4 14L0 15Z" fill="#dd5a2c" />
          <path d="M0 7C4 3 7 9 14 5V9C8 12 5 6 0 11Z" fill="#f5a183" />
          <path d="M4 1V14M9 3V16" stroke="#b8401a" strokeWidth="1" />
        </svg>
        <h1 className="whitespace-nowrap">ГИС Аксиома (Бесплатная версия) - [Карта: _11_piket,_11]</h1>
        <div className="ml-auto flex gap-[35px] pr-4 pb-1">
          <button type="button" aria-label="Свернуть">
            <svg width="11" height="11" stroke="#888" fill="none"><path d="M0 5.500H10" /></svg>
          </button>
          <button type="button" aria-label="Восстановить">
            <svg width="11" height="11" stroke="#888" fill="none"><path d="M.5 2.500H8.500V10.500H.5ZM2.500 2.500V.5H10.500V8.500H8.500" /></svg>
          </button>
          <button type="button" aria-label="Закрыть">
            <svg width="11" height="11" stroke="#888" fill="none"><path d="M.5.5L10.500 10.500M10.500.5L.5 10.500" /></svg>
          </button>
        </div>
      </header>

      <nav className="flex h-[19px] items-center border-b border-[#d6d6d6] bg-[#efefef] font-['Noto_Sans',sans-serif] text-[11px] text-black">
        <svg width="12" height="16" viewBox="6 0 18 24" fill="none" className="mr-[3px] shrink-0">
          <MapPic />
        </svg>
        {menu.map(([a, u, b]) => (
          <button key={a + u + b} type="button" className="px-1.5 whitespace-nowrap">
            {a}
            <span className="underline">{u}</span>
            {b}
          </button>
        ))}
        <div className="-mr-0.5 ml-auto flex gap-0.5">
          {mdi.map(([label, icon]) => (
            <button key={label} type="button" aria-label={label} className="flex size-[18px] items-center justify-center rounded-sm border border-[#a8a8a8] bg-[#fafafa]">
              <svg width="12" height="12" viewBox="0 0 12 12" fill="none" stroke="#444">
                <rect x="0.500" y="0.500" width="11" height="11" rx="2" />
                {icon}
              </svg>
            </button>
          ))}
        </div>
      </nav>

      <Toolbar items={row1} label="Основная панель" className="h-[39px]" />
      <Toolbar items={row2} label="Инструменты карты" active="Сдвиг" className="h-[39px]" />
      <Toolbar items={row3} label="Дополнительная панель" className="h-[38px]" />

      <main className="flex flex-1">
        <svg className="h-auto min-h-full w-full flex-1" role="img" aria-label="Карта _11_piket">
          <path d="M284 0L606 186L1250 557L1437 665" fill="none" stroke="#dc2222" strokeWidth="1.300" strokeDasharray="8 2" />
          {points.map((p) => (
            <g key={p.name}>
              <path d={`M${p.x} ${p.y - 7}l7 7l-7 7l-7 -7z`} fill="#00a800" stroke="#102010" strokeWidth="1" />
              <text x={p.x + 3} y={p.y - 3} fontFamily="Lato, sans-serif" fontSize="10" fill="#111">
                {p.name}
              </text>
            </g>
          ))}
        </svg>
      </main>
    </div>
  );
}
